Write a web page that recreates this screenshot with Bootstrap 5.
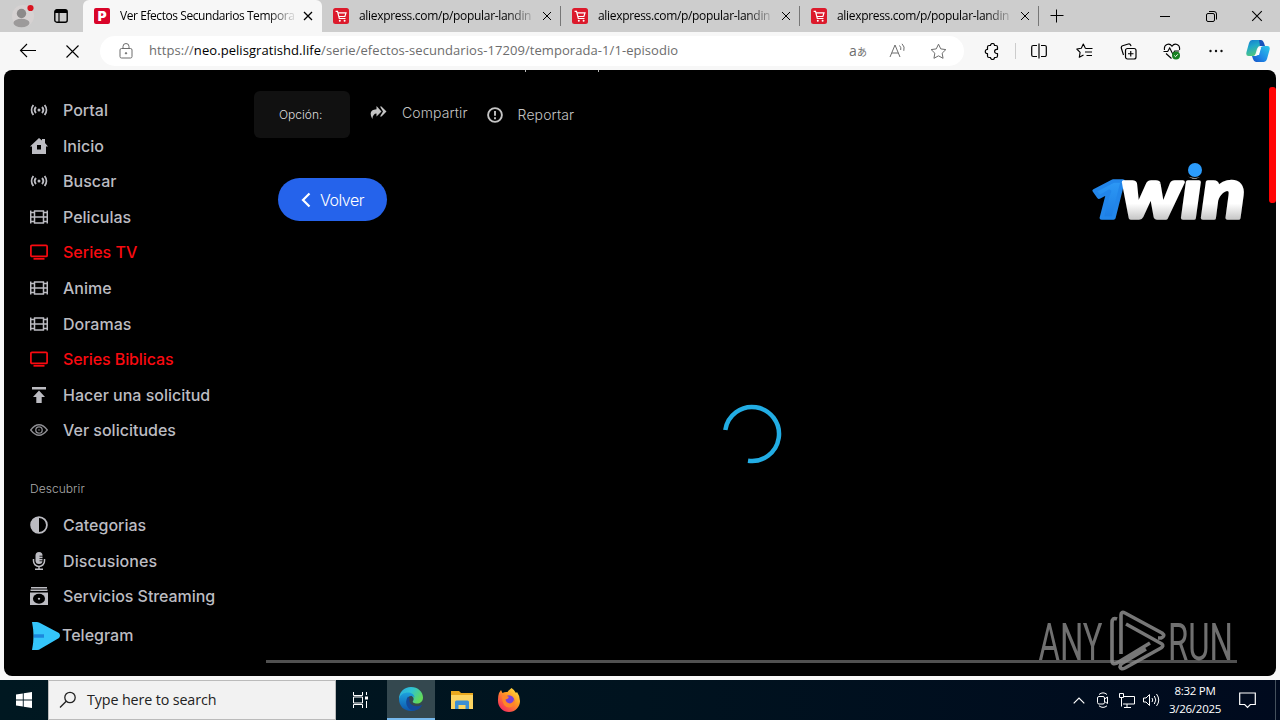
<!DOCTYPE html>
<html lang="es">
<head>
<meta charset="utf-8">
<meta name="viewport" content="width=device-width, initial-scale=1">
<title>Ver Efectos Secundarios Temporada 1</title>
<link href="https://cdn.jsdelivr.net/npm/bootstrap@5.3.0/dist/css/bootstrap.min.css" rel="stylesheet">
<style>
body{width:1280px;height:720px;overflow:hidden;background:#f7f7f7;font-family:"Open Sans","Noto Sans",sans-serif;color:#000}
svg{display:block;flex:none;fill:none;stroke:currentColor}
.cell{display:flex;align-items:center;justify-content:center;flex:none}
.tabstrip{height:32px;background:#cdcdcd;font-size:12px}
.lead-cells{width:83px;height:32px}
.lead-cells .cell{width:38px}
.btab{width:239px;height:32px;padding-left:11px;position:relative;flex:none}
.btab.on{background:#f7f7f7;border-radius:6px 6px 0 0}
.btab:not(.on)::after{content:"";position:absolute;right:0;top:6px;width:1px;height:20px;background:#777}
.btitle{width:176px;margin-left:10px;white-space:nowrap;letter-spacing:-.32px;-webkit-mask-image:linear-gradient(90deg,#000 84%,transparent 101%)}
.on .btitle{letter-spacing:-.43px}
.wbtn{width:46px}
.toolrow{height:38px;padding-left:6px}
.tcell{width:44px;height:38px}
.addr{width:864px;height:30px;border-radius:15px;background:#fff;margin:0 6px;color:#6d6d6d;font-size:13px}
.addr b{font-weight:400;color:#000}
.acell{width:40px}
.url{letter-spacing:.065px}
.page{height:606px;margin:0 4px;background:#000;border-radius:8px;font-family:Inter,sans-serif;overflow:hidden;position:relative}
.side{width:250px;padding:22.2px 0 0 26px}
.side a{height:35.6px;color:#bcbcc2;font-weight:500;font-size:16px;text-decoration:none;gap:15px;white-space:nowrap}
.side a.hot{color:#fa0a10}
.side h6{font-size:12px;font-weight:300;color:#aaa;margin:32.8px 0 10.5px;height:16px;line-height:16px;letter-spacing:.05px}
.opcion{width:96px;height:47px;background:#111;border-radius:6px;color:#ddd;font-size:12px;font-weight:300;padding-left:25px}
.act{color:#c4c4c4;font-size:14px;font-weight:300;gap:15px;letter-spacing:.1px}
.volver{width:109px;height:43px;border-radius:22px;background:#2563eb;color:#fff;font-size:16px;font-weight:300;letter-spacing:-.5px;margin:40px 0 0 24px}
.over{position:absolute}
.taskbar{height:40px;background:linear-gradient(90deg,#001821,#00131f 50%,#000a1e);color:#fff;margin-top:4px}
.search{width:288px;height:40px;background:#f2f2f2;border:1px solid #bbb;color:#222;font-size:14.3px;letter-spacing:-.12px}
.task{width:48px;height:40px}
.task.on{background:#34484f;border-bottom:2px solid #76b9ed}
.clock{width:72px;font-size:11.5px;line-height:18px;text-align:center;letter-spacing:-.25px;margin-left:-4px;flex:none}
</style>
</head>
<body>
<svg width="0" height="0" class="over">
<defs>
<linearGradient id="blue1" x1="0" y1="0" x2="0" y2="1"><stop offset="0" stop-color="#35a7ff"/><stop offset="1" stop-color="#1672dc"/></linearGradient>
<linearGradient id="white1" x1="0" y1="0" x2="0" y2="1"><stop offset=".65" stop-color="#fff"/><stop offset=".82" stop-color="#ccc"/></linearGradient>
<symbol id="radio" viewBox="0 0 18 18"><g stroke-width="1.9"><path d="M3.4 4A8 8 0 0 0 3.4 14M6 6a4.500 4.500 0 0 0 0 6M14.600 4a8 8 0 0 1 0 10M12 6a4.500 4.500 0 0 1 0 6"/><circle cx="9" cy="9" r="1.500" fill="currentColor" stroke="none"/></g></symbol>
<symbol id="film" viewBox="0 0 18 18"><path d="M.7 2.500v13M17.300 2.500v13M4.500 2.500v13M13.500 2.500v13M4 3h10M4 9h10M4 15h10M1 4.500h3M1 9h3M1 13.500h3M14 4.500h3M14 9h3M14 13.500h3" stroke-width="1.500"/></symbol>
<symbol id="tv" viewBox="0 0 18 18"><rect x=".9" y="2.400" width="16.200" height="11" rx="1" stroke-width="1.700"/><path d="M3.500 15.800h11" stroke-width="1.800"/></symbol>
<symbol id="x" viewBox="0 0 10 10"><path d="M1 1l8 8M9 1L1 9"/></symbol>
<symbol id="cart" viewBox="0 0 16 16"><rect width="16" height="16" rx="2.500" fill="#dc1a2c" stroke="none"/><path d="M2.600 3.300h1.900l1.800 7.200h6.200M5 4.800h8l-1.100 3.700H6" stroke="#fff" stroke-width="1.200"/><circle cx="6.800" cy="12.700" r="1" fill="#fff" stroke="none"/><circle cx="11.600" cy="12.700" r="1" fill="#fff" stroke="none"/></symbol>
</defs></svg>

<div class="tabstrip d-flex">
  <div class="lead-cells d-flex ps-1">
    <div class="cell"><svg width="24" height="26" viewBox="0 0 24 26"><g stroke="none"><circle cx="12" cy="13" r="11" fill="#d6d2d2"/><circle cx="10.500" cy="10.500" r="4.700" fill="#8c8a8a"/><ellipse cx="10.500" cy="20" rx="8" ry="4.200" fill="#9c9a9a"/><circle cx="19.500" cy="5" r="3.100" fill="#d9131f"/></g></svg></div>
    <div class="cell"><svg width="14" height="14" viewBox="0 0 14 14"><rect x=".8" y=".8" width="12.400" height="12.400" rx="2" stroke-width="1.400"/><path d="M1 2.500h12" stroke-width="3"/><path d="M5 3v10" stroke-width="1.200"/></svg></div>
  </div>
  <div class="btab on d-flex align-items-center">
    <svg width="16" height="16"><rect width="16" height="16" rx="2" fill="#d90429" stroke="none"/><text x="3.700" y="13" font-family="Inter" font-size="13.500" font-weight="900" fill="#fff" stroke="none">P</text></svg>
    <div class="btitle">Ver Efectos Secundarios Tempora</div><svg width="10" height="10" style="margin-left:7px"><use href="#x" stroke-width="1.300"/></svg>
  </div>
  <div class="btab d-flex align-items-center"><svg width="16" height="16"><use href="#cart"/></svg><div class="btitle">aliexpress.com/p/popular-landin</div><svg width="10" height="10" style="margin-left:7px"><use href="#x"/></svg></div>
  <div class="btab d-flex align-items-center"><svg width="16" height="16"><use href="#cart"/></svg><div class="btitle">aliexpress.com/p/popular-landin</div><svg width="10" height="10" style="margin-left:7px"><use href="#x"/></svg></div>
  <div class="btab d-flex align-items-center"><svg width="16" height="16"><use href="#cart"/></svg><div class="btitle">aliexpress.com/p/popular-landin</div><svg width="10" height="10" style="margin-left:7px"><use href="#x"/></svg></div>
  <div class="cell" style="width:36px"><svg width="14" height="14"><path d="M6.500 .5v13M.5 6.500h13"/></svg></div>
  <div class="d-flex ms-auto">
    <div class="cell wbtn"><svg width="10" height="10"><path d="M0 5.500h10"/></svg></div>
    <div class="cell wbtn"><svg width="11" height="11"><rect x=".5" y="2.500" width="8" height="8" rx="1.500"/><path d="M3 .5h5a2.500 2.500 0 0 1 2.500 2.500v5.500"/></svg></div>
    <div class="cell wbtn"><svg width="12" height="12"><use href="#x" stroke-width=".9"/></svg></div>
  </div>
</div>

<div class="toolrow d-flex align-items-center">
  <div class="cell tcell"><svg width="18" height="16"><path d="M17 7.500H1.500M8 1L1.500 7.500 8 14" stroke-width="1.100"/></svg></div>
  <div class="cell tcell"><svg width="15" height="15"><use href="#x" stroke-width=".75"/></svg></div>
  <div class="addr d-flex align-items-center">
    <div class="cell" style="width:49px;padding-left:3px"><svg width="14" height="16"><rect x="1" y="5.500" width="12" height="9.500" rx="1.500"/><path d="M4 5.500V3.500a3 3 0 0 1 6 0v2"/><circle cx="7" cy="10.300" r=".7" fill="currentColor"/></svg></div>
    <div class="url">https://<b>neo.pelisgratishd.life</b>/serie/efectos-secundarios-17209/temporada-1/1-episodio</div>
    <div class="d-flex ms-auto" style="padding-right:6px">
      <div class="cell acell" style="font-size:14px;line-height:18px">a<span style="font:10px 'Noto Sans CJK JP',sans-serif">あ</span></div>
      <div class="cell acell"><svg width="18" height="16"><path d="M1 14L6 2l5 12M2.800 10h6.500M10.500 2.500q2 2 1.200 4.500M13 .8q3.200 3 1.800 7"/></svg></div>
      <div class="cell acell"><svg width="17" height="17" viewBox="0 0 17 17"><path d="M8.500 1.200l2.250 4.700 5.100.7-3.700 3.600.9 5.100-4.550-2.450L3.950 15.300l.9-5.100-3.700-3.600 5.100-.7z" stroke-linejoin="round"/></svg></div>
    </div>
  </div>
  <div class="cell tcell"><svg width="17" height="17"><path d="M5 2.500h1.500a2 2 0 0 1 4 0H12a1.500 1.500 0 0 1 1.500 1.500v2.300h-.8a2 2 0 1 0 0 4.200h.8V13a1.500 1.500 0 0 1-1.500 1.500h-1.500a2 2 0 0 1-4 0H5A1.500 1.500 0 0 1 3.500 13v-2.300a2.200 2.200 0 0 1 0-4.400V4A1.500 1.500 0 0 1 5 2.500z" stroke-width="1.200" stroke-linejoin="round"/></svg></div>
  <div style="width:4px;height:16px;border-left:1px solid #ccc;margin-left:1px;margin-right:-1px"></div>
  <div class="cell tcell" style="margin-left:-1px;margin-right:1px"><svg width="16" height="16"><path d="M6 2.500H2.200a1.500 1.500 0 0 0-1.500 1.500v8a1.500 1.500 0 0 0 1.500 1.500H6M10 2.500h3.800a1.500 1.500 0 0 1 1.500 1.500v8a1.500 1.500 0 0 1-1.500 1.500H10M8 .5v15" stroke-width="1.200"/></svg></div>
  <div class="cell tcell"><svg width="17" height="16"><path d="M9.500 5.500L7.300 1 5.300 5.300.8 6l3.300 3.300-.8 5 4.200-2.300M9.500 5.500h7M9 9h7M10.500 12.500H16" stroke-width="1.100" stroke-linejoin="round"/></svg></div>
  <div class="cell tcell"><svg width="17" height="17"><rect x="5.500" y="5.500" width="10.500" height="10.500" rx="2" stroke-width="1.200"/><path d="M10.750 8v5.500M8 10.750h5.500M3.500 12L1.300 5a2 2 0 0 1 1.300-2.200L8.300 1a2 2 0 0 1 2.400 1.200l.3 1" stroke-width="1.150"/></svg></div>
  <div class="cell tcell"><svg width="18" height="17"><path d="M1.500 7C.5 1 6.500-.5 9 3.300 11.500-.5 17.500 1 16.500 7M.5 8.500h4.200l2-3.500 3 6 2-3h4.500M3 10.500l5.500 5" stroke-width="1.100"/><circle cx="13" cy="12.500" r="4" fill="#168020" stroke="none"/><path d="M11.300 12.500l1.200 1.200 2.300-2.400" stroke="#fff"/></svg></div>
  <div class="cell tcell"><svg width="14" height="4"><g fill="#111" stroke="none"><circle cx="1.500" cy="2" r="1.200"/><circle cx="7" cy="2" r="1.200"/><circle cx="12.500" cy="2" r="1.200"/></g></svg></div>
  <div class="cell" style="width:40px"><svg width="24" height="24"><defs><linearGradient id="cpa" x1="0" y1="0" x2=".4" y2="1"><stop stop-color="#1478cf"/><stop offset=".45" stop-color="#20a8ca"/><stop offset="1" stop-color="#52c87c"/></linearGradient><linearGradient id="cpb" x1="1" y1="0" x2="0" y2="1"><stop stop-color="#2ccae8"/><stop offset=".6" stop-color="#1e86e6"/><stop offset="1" stop-color="#1650c4"/></linearGradient></defs><g stroke="none"><path d="M6 1h8q2 0 3 3l1 3h-4q-2 0-3 3l-1.500 5q-.8 2-2.500 2H2.500Q-.5 17 .5 13L3 4q.8-3 3-3z" fill="url(#cpa)"/><path d="M18 7h3.500q3 0 2 4l-2.500 9q-.8 3-3 3h-8q-2 0-3-3l-1-3h4q2 0 3-3l1.500-5q.8-2 3.500-2z" fill="url(#cpb)"/><path d="M13 1h2q2 0 3 3l1 3h-5z" fill="#1852bb"/><path d="M12.500 9h2.500l-2 7h-2.500z" fill="#fff"/></g></svg></div>
</div>

<main class="page d-flex">
  <nav class="side d-flex flex-column flex-shrink-0">
    <a class="d-flex align-items-center" href="#"><svg width="18" height="18"><use href="#radio"/></svg>Portal</a>
    <a class="d-flex align-items-center" href="#"><svg width="18" height="18"><path d="M9 1l3 2.600V2h3v4l3 3.500h-2V17H2V9.500H0zM7 8v4.500h4V8z" fill="currentColor" stroke="none" fill-rule="evenodd"/></svg>Inicio</a>
    <a class="d-flex align-items-center" href="#"><svg width="18" height="18"><use href="#radio"/></svg>Buscar</a>
    <a class="d-flex align-items-center" href="#"><svg width="18" height="18"><use href="#film"/></svg>Peliculas</a>
    <a class="d-flex align-items-center hot" href="#"><svg width="18" height="18"><use href="#tv"/></svg>Series TV</a>
    <a class="d-flex align-items-center" href="#"><svg width="18" height="18"><use href="#film"/></svg>Anime</a>
    <a class="d-flex align-items-center" href="#"><svg width="18" height="18"><use href="#film"/></svg>Doramas</a>
    <a class="d-flex align-items-center hot" href="#" style="letter-spacing:-.1px"><svg width="18" height="18"><use href="#tv"/></svg>Series Biblicas</a>
    <a class="d-flex align-items-center" href="#"><svg width="18" height="18"><path d="M2 1h14v2.400H2zM9 4.500l6 6.500h-3.300v6H6.300v-6H3z" fill="currentColor" stroke="none"/></svg>Hacer una solicitud</a>
    <a class="d-flex align-items-center" href="#"><svg width="18" height="18" opacity=".75"><path d="M.7 9Q9-1.500 17.300 9 9 19.500.7 9z" stroke-width="1.300"/><circle cx="9" cy="9" r="3.200" stroke-width="1.300"/><circle cx="9" cy="9" r=".8" fill="currentColor" stroke="none"/></svg>Ver solicitudes</a>
    <h6>Descubrir</h6>
    <a class="d-flex align-items-center" href="#"><svg width="18" height="18"><circle cx="9" cy="9" r="7.900" stroke-width="1.800"/><path d="M9 1a8 8 0 0 0 0 16z" fill="currentColor" stroke="none"/></svg>Categorias</a>
    <a class="d-flex align-items-center" href="#" style="letter-spacing:.12px"><svg width="18" height="18"><rect x="5.500" y="0" width="7" height="12" rx="3.500" fill="currentColor" stroke="none"/><path d="M3.500 7v2a5.500 5.500 0 0 0 11 0V7M9 14.500v2.700M5 17.200h8" stroke-width="1.500"/><path d="M9.500 4.200H13M9.500 6.500H13M9.500 8.800H13" stroke="#000" stroke-width=".8"/></svg>Discusiones</a>
    <a class="d-flex align-items-center" href="#" style="letter-spacing:-.06px"><svg width="18" height="18"><g fill="currentColor" stroke="none"><path d="M1 0h16v1.500H1zM.5 2.600h17v1.500H.5zM0 5.500h18V18H0z"/><ellipse cx="9" cy="11.800" rx="6" ry="5" fill="#000"/><ellipse cx="9" cy="11.800" rx="1.200" ry="1"/></g></svg>Servicios Streaming</a>
    <a class="d-flex align-items-center" href="#" style="height:42px;gap:2px;padding-left:2px"><svg width="28" height="28" class="mt-1" style="margin-bottom:3px"><path d="M0 0h5q2 0 4 1.500L27 11q2 2.500 0 5L9 26.500Q7 28 5 28H0Q3 14 0 0z" fill="#34c5fa" stroke="none"/><path d="M2 14h10" stroke="#1c87dc" stroke-width="3.500"/></svg><span>Telegram</span></a>
  </nav>
  <section class="flex-grow-1">
    <div class="d-flex" style="margin-top:21px;height:47px">
      <div class="opcion d-flex align-items-center">Opción:</div>
      <div class="act d-flex align-items-center" style="margin-left:20px;height:43px"><svg width="17" height="14"><path d="M6.500 0l5 5.500-5 5V7.500Q3 7.500 2.300 13-2.500 4 6.500 3.300zM10 .5h1.500l5 5-5 5H10l3-5z" fill="currentColor" stroke="none"/></svg><span>Compartir</span></div>
      <div class="act d-flex align-items-center" style="margin-left:19px;height:47px"><svg width="16" height="16"><circle cx="8" cy="8" r="6.900" stroke-width="1.900"/><path d="M8 4v4.800M8 10.200v2" stroke-width="1.900"/></svg><span>Reportar</span></div>
    </div>
    <button class="volver btn p-0 d-flex align-items-center justify-content-center border-0"><svg width="10" height="16" style="margin-right:9px"><path d="M8.500 1.500L2 8l6.500 6.500" stroke-width="2.200"/></svg>Volver</button>
  </section>

  <svg class="over" style="left:1086px;top:88px" width="160" height="66"><g stroke="none"><text x="0" y="59.500" font-family="Open Sans" font-weight="800" font-style="italic" font-size="51" fill="url(#blue1)" textLength="36" lengthAdjust="spacingAndGlyphs" style="stroke:#2286ea;stroke-width:3.500;stroke-linejoin:round">1</text><text x="31.500" y="60" font-family="Lato" font-weight="900" font-style="italic" font-size="70" fill="url(#white1)" textLength="124" lengthAdjust="spacingAndGlyphs" style="stroke:url(#white1);stroke-width:3.500;stroke-linejoin:round">win</text><ellipse cx="105" cy="10" rx="14" ry="10" fill="#000"/><circle cx="105" cy="12" r="7" fill="#2b9bfb"/></g></svg>
  <svg class="over" style="left:716px;top:332px" width="64" height="64"><path d="M5.300 28A27 27 0 1 1 28 58.700" stroke="#22ade4" stroke-width="4.500"/></svg>
  <div class="over" style="left:262px;top:590px;width:971px;height:3px;background:#505050"></div>
  <div class="over" style="left:521px;top:0;width:74px;height:2px;border:solid #bbb;border-width:0 1px"></div>
  <div class="over" style="left:1265px;top:17px;width:7px;height:116px;background:#f00;border-radius:3px"></div>
  <svg class="over" style="left:1030px;top:536px" width="205" height="70"><g opacity=".8" font-family="Roboto" font-weight="400" font-size="51" fill="#8c8c8c" stroke="none"><text x="4.500" y="53.500" textLength="64" lengthAdjust="spacingAndGlyphs">ANY</text><text x="134" y="53.500" textLength="65" lengthAdjust="spacingAndGlyphs">RUN</text></g><g stroke="#8c8c8c" stroke-width="3.600" opacity=".85" stroke-linejoin="round"><path d="M83 13q-5-2-5 4v38q0 4 5 2L116 37M87 48V9q0-4 4-2l37 20q4 3-1 5l-3 0M92 18l36 20q2 2-1 4L91 62q-4 2-5-1l1-3L112 43"/></g></svg>
</main>

<footer class="taskbar d-flex align-items-center">
  <div class="cell task"><svg width="16" height="16"><path d="M0 2.400L6.800 1.400V7.500H0zM7.700 1.300L16 0v7.500H7.700zM0 8.400h6.800v6.200L0 13.600zM7.700 8.400H16V16l-8.300-1.300z" fill="#fff" stroke="none"/></svg></div>
  <div class="search d-flex align-items-center"><svg width="18" height="18" style="margin:0 10px 0 10px"><circle cx="11" cy="6.500" r="5.200" stroke-width="1.300"/><path d="M7.200 10.300L1 16.500" stroke-width="1.300"/></svg><span>Type here to search</span></div>
  <div class="cell task"><svg width="17" height="16"><path d="M1.500 0v3.500h9V0M1.500 16v-3.500h9V16M1.500 5h9v6h-9zM14.500 0v3M14.500 9v7"/><path d="M13 4.500h3v3h-3z" fill="#fff" stroke="none"/></svg></div>
  <div class="cell task on" style="margin-left:3px"><svg width="24" height="24" viewBox="0 0 24 24"><defs><linearGradient id="eg" x1="0" y1="0" x2="1" y2=".5"><stop stop-color="#2ba8df"/><stop offset=".5" stop-color="#2fc4d3"/><stop offset="1" stop-color="#62d95a"/></linearGradient><linearGradient id="eb" x1="0" y1="0" x2="0" y2="1"><stop stop-color="#1da1dd"/><stop offset="1" stop-color="#0d56ad"/></linearGradient></defs><g stroke="none"><path d="M0 12C0 5 5 0 12 0s12 5 12 10.500c0 4-3 6-6 6s-5-1.200-4-2.500c1.500-2 .5-5.500-3.500-5.500C6 8.500 2 10 0 12z" fill="url(#eg)"/><path d="M0 12C1 7.500 5 5.500 9 5.500c4 0 6.500 2.500 6.500 5C12.500 7.500 8 9 8 14c0 4.500 4 9 10 8.500-2 1-4 1.500-6 1.500C5 24 0 19 0 12z" fill="url(#eb)"/><path d="M9 9.500C4.500 16 9 24 15.500 23.500c3 0 6-2.200 7.200-4.700.3-.6-.2-.9-.7-.6-5 2.700-13 0-11.500-6.700z" fill="#14499a"/></g></svg></div>
  <div class="cell task ms-1" style="width:46px"><svg width="22" height="20"><g stroke="none"><path d="M0 1h8l2 2h12v16H0z" fill="#e9a81e"/><path d="M0 5h22v14H0z" fill="#fcd462"/><path d="M4 19v-7q0-1.500 1.500-1.500h11q1.500 0 1.500 1.500v7h-3.500v-4h-7v4z" fill="#3d8fd4"/></g></svg></div>
  <div class="cell task"><svg width="24" height="24"><defs><linearGradient id="ff" x1="1" y1="0" x2=".2" y2="1"><stop stop-color="#fff14a"/><stop offset=".45" stop-color="#ff9b22"/><stop offset="1" stop-color="#f52560"/></linearGradient></defs><g stroke="none"><path d="M2 5l2-3 1.500 3Q8 3.500 10.500 4 12 2 14.500 0 17 1.500 19 5l1-1q3 4 3 9A11 11 0 0 1 1 13Q.8 8.500 2 5z" fill="url(#ff)"/><circle cx="12" cy="12.500" r="5.300" fill="#7a41d8"/><path d="M5 8q4-1.500 7 1-1 2-3.500 2.500Q9 15 13 15.500q4-1 4-5 2 8-4.500 9Q5 19.500 5 8z" fill="#ff8527"/></g></svg></div>
  <div class="d-flex align-items-center ms-auto" style="height:40px">
    <div class="cell" style="width:25px"><svg width="12" height="7"><path d="M.7 6.300L6 1l5.300 5.300" stroke-width="1.200"/></svg></div>
    <div class="cell" style="width:24px"><svg width="14" height="16"><rect x="1.500" y="4.500" width="7" height="7.500" rx="1.500"/><path d="M8.500 7l3-2v6.500l-3-2M3 2.500Q7-.8 11 2.500M3 13.800q4 3.200 8 0"/></svg></div>
    <div class="cell" style="width:24px"><svg width="16" height="15"><path d="M5 3.500h10.500v7.500H4M8 11v3M5 14.500h7M.5.500h4v4h-4zM2.500 4.500v9"/></svg></div>
    <div class="cell" style="width:24px"><svg width="17" height="14"><path d="M.5 5h2.500l3.500-3.500v11L3 9H.5zM9 5q1.500 2 0 4M11.300 3q3 4 0 8M13.500 1q4.500 6 0 12"/></svg></div>
    <div class="clock"><div>8:32 PM</div><div>3/26/2025</div></div>
    <div class="cell" style="width:32px"><svg width="17" height="17"><path d="M.7 1h15.600v11.500h-5L8.500 15.300 5.700 12.500h-5z" stroke-width="1.200"/></svg></div>
    <div style="width:5px;height:40px;border-left:1px solid #44505c;margin-left:12px"></div>
  </div>
</footer>
<script src="https://cdn.jsdelivr.net/npm/bootstrap@5.3.0/dist/js/bootstrap.bundle.min.js"></script>
</body>
</html>
